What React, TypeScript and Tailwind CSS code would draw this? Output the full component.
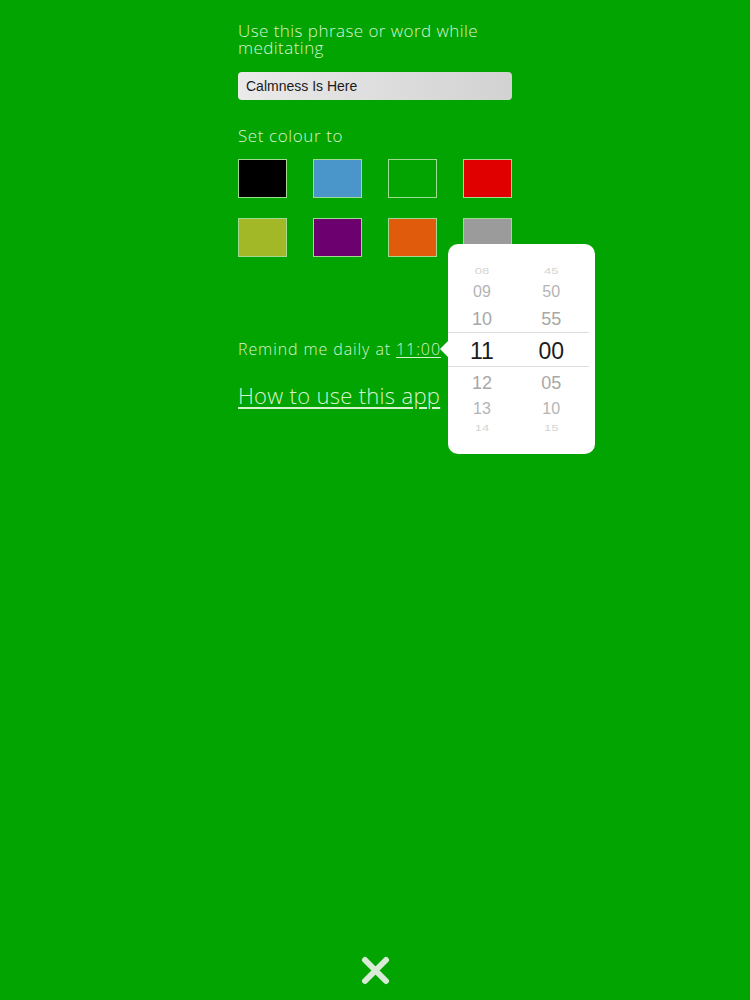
import React from 'react'

const SWATCHES = [
  'bg-black',
  'bg-[#4a96cb]',
  'bg-transparent',
  'bg-[#e10000]',
  'bg-[#a3b826]',
  'bg-[#6c006f]',
  'bg-[#e05c0c]',
  'bg-[#9b9b9b]',
]

const HOURS_ABOVE = ['08', '09', '10']
const MINS_ABOVE = ['45', '50', '55']
const HOURS_BELOW = ['12', '13', '14']
const MINS_BELOW = ['05', '10', '15']

function PickerColumn({ above, selected, below }: { above: string[]; selected: string; below: string[] }) {
  return (
    <div className="flex flex-col items-center">
      <div className="flex flex-col items-center">
        <span className="text-[13px] leading-[14px] text-[#d4d4d4] scale-y-75 mt-[20px]">{above[0]}</span>
        <span className="text-[16px] leading-[26px] text-[#b4b4b4] mt-[1px]">{above[1]}</span>
        <span className="text-[18px] leading-[28px] text-[#a8a8a8]">{above[2]}</span>
      </div>
      <span className="text-[23px] leading-[36px] text-[#1c1c1c]">{selected}</span>
      <div className="flex flex-col items-center">
        <span className="text-[18px] leading-[28px] text-[#a8a8a8]">{below[0]}</span>
        <span className="text-[16px] leading-[24px] text-[#b4b4b4]">{below[1]}</span>
        <span className="text-[13px] leading-[14px] text-[#d4d4d4] scale-y-75">{below[2]}</span>
      </div>
    </div>
  )
}

export default function App() {
  return (
    <div className="relative w-[750px] h-[1000px] bg-[#02a402] overflow-hidden font-['Open_Sans',sans-serif] font-light text-[#d6f3cf]">
      <div className="flex flex-col w-[274px] ml-[238px] pt-[22px]">
        <p className="text-[17px] leading-[17px] tracking-[0.45px]">Use this phrase or word while meditating</p>
        <div className="mt-[16px] h-[28px] rounded-[4px] bg-gradient-to-r from-[#eaeaea] to-[#d2d2d2] flex items-center px-[8px] font-['Liberation_Sans',sans-serif] font-normal text-[14px] text-[#1b1b1b]">
          Calmness Is Here
        </div>
        <p className="mt-[26px] text-[17px] leading-[20px] tracking-[0.6px]">Set colour to</p>
        <div className="mt-[13px] grid grid-cols-4 gap-x-[26px] gap-y-[20px]">
          {SWATCHES.map((c, i) => (
            <div key={i} className={`h-[39px] w-[49px] border border-[#9fdc8f] ${c}`} />
          ))}
        </div>
        <p className="mt-[82px] text-[16px] leading-[20px] tracking-[0.9px] whitespace-nowrap">
          Remind me daily at <span className="underline underline-offset-2">11:00</span>
        </p>
        <p className="mt-[23px] text-[22px] leading-[26px] tracking-[0.3px] underline underline-offset-[3px] whitespace-nowrap">How to use this app</p>
      </div>

      {/* time picker popover */}
      <div className="absolute left-[448px] top-[244px] w-[147px] h-[210px] rounded-[10px] bg-white font-['Liberation_Sans',sans-serif]">
        <div className="absolute left-[-8px] top-[96px] w-0 h-0 border-y-[9px] border-y-transparent border-r-[9px] border-r-white" />
        <div className="absolute left-0 right-[6px] top-[88px] h-[35px] border-y border-[#dedede]" />
        <div className="relative flex justify-between pl-[22px] pr-[31px]">
          <PickerColumn above={HOURS_ABOVE} selected="11" below={HOURS_BELOW} />
          <PickerColumn above={MINS_ABOVE} selected="00" below={MINS_BELOW} />
        </div>
      </div>

      <div className="absolute left-[361px] top-[956px]">
        <svg width="29" height="29" viewBox="0 0 29 29">
          <path d="M4 4 L25 25 M25 4 L4 25" stroke="#d9ead6" strokeWidth="6" strokeLinecap="round" />
        </svg>
      </div>
    </div>
  )
}
